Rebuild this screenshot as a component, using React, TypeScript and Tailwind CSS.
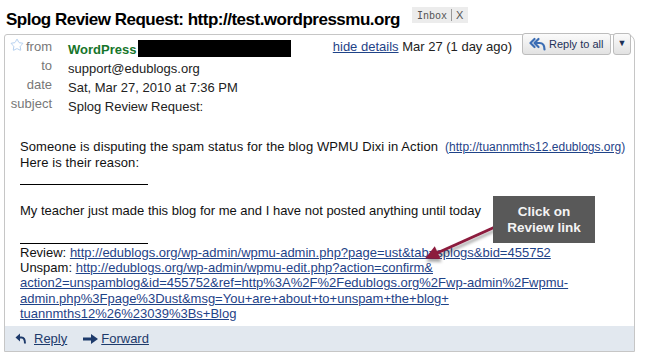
import React from "react";
import { Star } from "lucide-react";

const linkCls = "text-[#1f4388] underline";

const ReplyAllIcon = () => (
  <svg width="17" height="14" viewBox="0 0 17 14" fill="none" stroke="#3b6db4" strokeWidth="2.2" strokeLinecap="round" strokeLinejoin="round">
    <path d="M5.5 2 L1.5 6 L5.5 10" />
    <path d="M9.5 2 L5.5 6 L9.5 10" />
    <path d="M7 6 H10.5 C13.8 6 15.5 8.3 15.5 12.5" />
  </svg>
);

const ReplyIcon = () => (
  <svg width="11" height="11" viewBox="0 0 11 11">
    <path d="M5 0.5 L0.5 4.5 L5 8.5 Z" fill="#1d3a6b" />
    <path d="M4 4.5 H6.5 C8.8 4.5 10 6.3 10 10.5" fill="none" stroke="#1d3a6b" strokeWidth="2" />
  </svg>
);

const ForwardIcon = () => (
  <svg width="15" height="10" viewBox="0 0 15 10">
    <rect x="0" y="3.5" width="9" height="3" fill="#1d3a6b" />
    <path d="M8 0 L15 5 L8 10 Z" fill="#1d3a6b" />
  </svg>
);

const rows: { label: string; value: React.ReactNode }[] = [
  {
    label: "from",
    value: (
      <>
        <span className="font-bold text-[#16752a]">WordPress</span>
        <span className="ml-[2px] inline-block h-[17px] w-[153px] bg-black align-top" />
      </>
    ),
  },
  { label: "to", value: "support@edublogs.org" },
  { label: "date", value: "Sat, Mar 27, 2010 at 7:36 PM" },
  { label: "subject", value: "Splog Review Request:" },
];

export default function App() {
  return (
    <div className="relative h-[355px] w-[650px] overflow-hidden bg-white font-['Liberation_Sans',Arial,sans-serif] text-[#111]">
      {/* subject title */}
      <div className="flex h-[34px] items-start pl-[6px] pt-[9px]">
        <h1 className="text-[17px] font-bold leading-[22px] tracking-[-0.5px] text-black">
          Splog Review Request: http://test.wordpressmu.org
        </h1>
        <div className="ml-[12px] -mt-[2px] flex h-[16px] items-center bg-[#ececec] px-[5px] font-['DejaVu_Sans_Mono',monospace] text-[10px] text-[#555]">
          Inbox
          <span className="mx-[4px] h-[12px] w-px bg-[#999]" />
          <span className="font-['Liberation_Sans',sans-serif] text-[11px]">X</span>
        </div>
      </div>

      {/* message card */}
      <div className="ml-[4px] w-[631px] rounded-tl-[3px] rounded-tr-[8px] border border-[#c6c6c6] text-[13px]">
        <div className="flex pt-[5px]">
          <div>
            {rows.map((r, i) => (
              <div key={r.label} className="flex h-[19px]">
                <div className="flex w-[47px] justify-end leading-[13px] text-[#777]">
                  {i === 0 && (
                    <Star size={14} strokeWidth={1.3} color="#9dc1ea" className="-mt-[2px] ml-[5px] mr-auto" />
                  )}
                  {r.label}
                </div>
                <div className="ml-[16px] leading-[19px] text-[#222]">{r.value}</div>
              </div>
            ))}
          </div>
          <div className="ml-auto mr-[3px] flex items-start">
            <div className="leading-[13px] text-[#222]">
              <span className={linkCls}>hide details</span> Mar 27 (1 day ago)
            </div>
            <div className="-mt-[7px] ml-[10px] flex gap-[2px]">
              <button className="flex h-[22px] w-[89px] items-center gap-[3px] rounded-[3px] border border-[#bdbdbd] bg-gradient-to-b from-[#fbfbfb] to-[#e2e2e2] pl-[6px] text-[11px] text-[#1f3158]">
                <ReplyAllIcon />
                Reply to all
              </button>
              <button className="flex h-[22px] w-[18px] items-center justify-center rounded-[3px] border border-[#bdbdbd] bg-gradient-to-b from-[#fbfbfb] to-[#e2e2e2] text-[9px] text-[#1b2f55]">
                ▼
              </button>
            </div>
          </div>
        </div>

        {/* body */}
        <div className="pl-[15px] pr-[4px]">
          <div className="mt-[23px] leading-[16px] tracking-[0.1px]">
            Someone is disputing the spam status for the blog WPMU Dixi in Action
            <span className="ml-[7px] text-[12px] tracking-normal text-[#1f4388]">
              (<span className="underline">http://tuannmths12.edublogs.org</span>)
            </span>
            <br />
            Here is their reason:
          </div>
          <div className="mt-[13px] h-px w-[128px] bg-black" />
          <div className="mt-[18px] leading-[16px]">
            My teacher just made this blog for me and I have not posted anything until today
          </div>
          <div className="mt-[24px] h-px w-[128px] bg-black" />
          <div className="mt-px leading-[15.2px]">
            Review:{" "}
            <span className={linkCls}>
              http://edublogs.org/wp-admin/wpmu-admin.php?page=ust&amp;tab=splogs&amp;bid=455752
            </span>
            <br />
            Unspam:{" "}
            <span className={linkCls}>
              http://edublogs.org/wp-admin/wpmu-edit.php?action=confirm&amp;
              <br />
              action2=unspamblog&amp;id=455752&amp;ref=http%3A%2F%2Fedublogs.org%2Fwp-admin%2Fwpmu-
              <br />
              admin.php%3Fpage%3Dust&amp;msg=You+are+about+to+unspam+the+blog+
              <br />
              tuannmths12%26%23039%3Bs+Blog
            </span>
          </div>
        </div>

        {/* footer actions */}
        <div className="mt-[5px] flex h-[25px] items-center bg-[#e2e8ef] pl-[10px] text-[13px] text-[#1d3a6b]">
          <ReplyIcon />
          <span className="ml-[8px] underline">Reply</span>
          <span className="ml-[16px]">
            <ForwardIcon />
          </span>
          <span className="ml-[3px] underline">Forward</span>
        </div>
      </div>

      {/* annotation arrow */}
      <svg className="pointer-events-none absolute left-0 top-0" width="650" height="355">
        <defs>
          <filter id="sh" x="-20%" y="-20%" width="140%" height="160%">
            <feDropShadow dx="1" dy="3" stdDeviation="1.6" floodColor="#000" floodOpacity="0.35" />
          </filter>
        </defs>
        <g filter="url(#sh)">
          <line x1="495" y1="227" x2="436" y2="253.5" stroke="#8c1a3e" strokeWidth="3" />
          <path d="M425 258.5 L434.8 246.3 L440.6 259.1 Z" fill="#8c1a3e" />
        </g>
      </svg>

      {/* callout */}
      <div className="absolute left-[493px] top-[196px] flex h-[47px] w-[102px] flex-col items-center justify-center bg-[#595959] text-center text-[13.5px] font-bold leading-[15.7px] text-[#f4f4f4]">
        <span>Click on</span>
        <span>Review link</span>
      </div>
    </div>
  );
}
